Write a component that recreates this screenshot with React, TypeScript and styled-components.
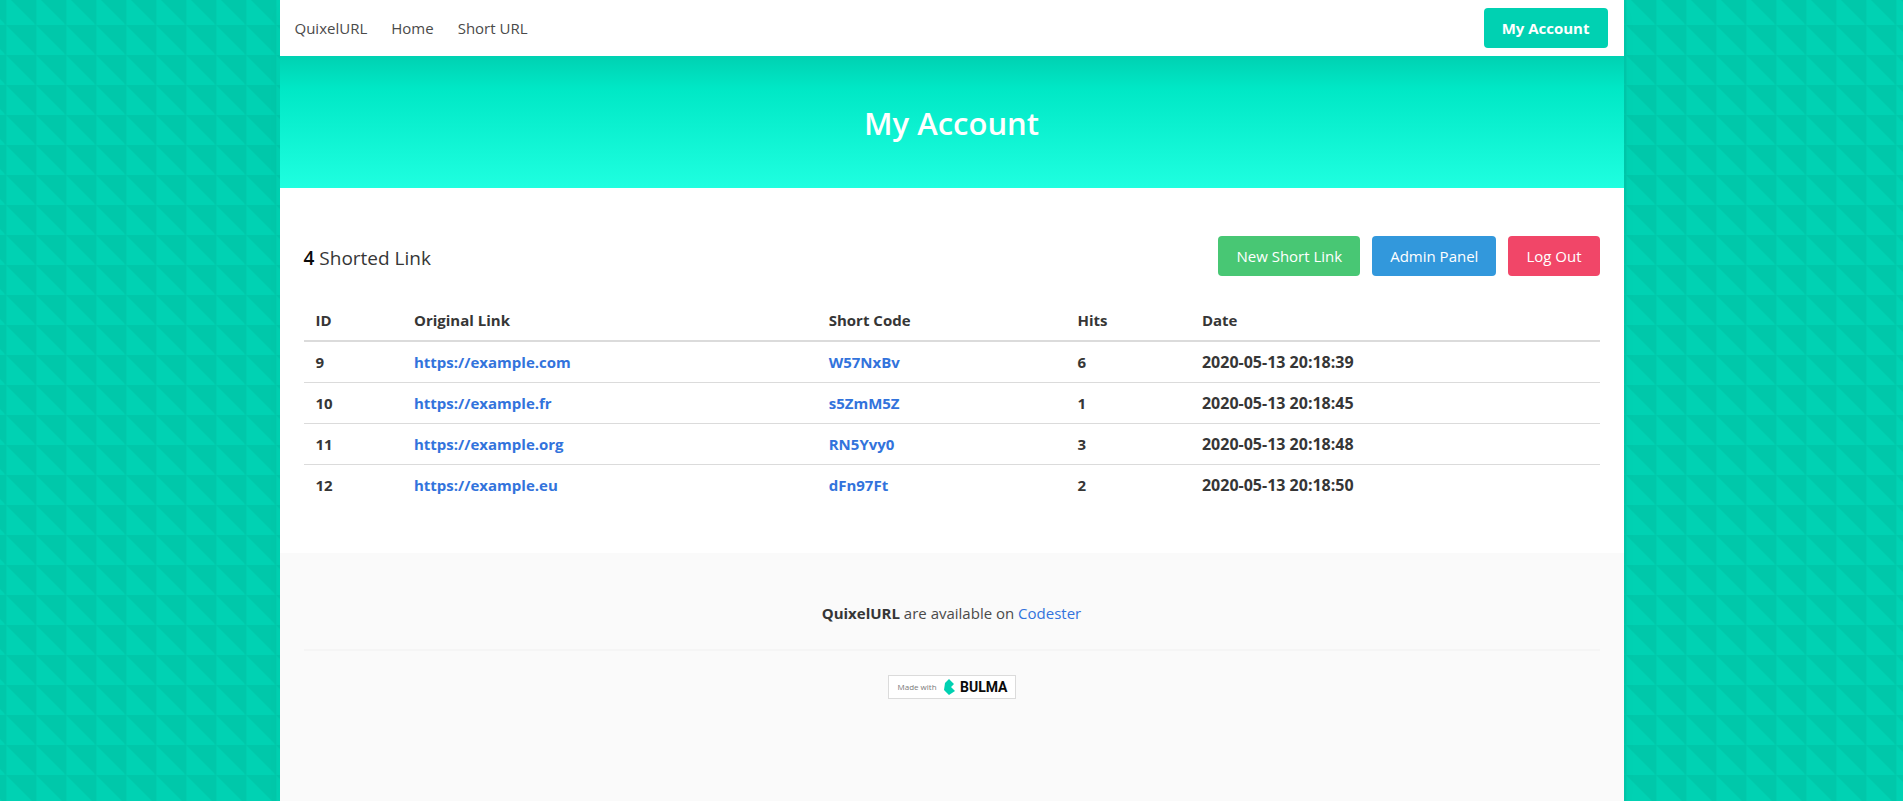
import React from 'react';
import styled, { createGlobalStyle } from 'styled-components';

const GlobalStyle = createGlobalStyle`
  *, *::before, *::after { box-sizing: border-box; }
  body {
    margin: 0;
    font-family: "Open Sans", "Noto Sans", sans-serif;
    font-size: 15px;
    line-height: 24px;
    color: #4a4a4a;
    background-color: #00d1b2;
    background-image:
      linear-gradient(90deg, rgba(0, 200, 170, 0.4) 3px, transparent 3px),
      linear-gradient(45deg, #00d2b3 49%, #00c8aa 51%);
    background-size: 30px 30px;
    background-position: 4px 25px, 6px 25px;
  }
`;

const Page = styled.div`
  display: flex;
  flex-direction: column;
  max-width: 1344px;
  min-height: 100vh;
  margin: 0 auto;
  background: #fff;
  box-shadow: 0 8px 16px -2px rgba(10, 10, 10, 0.04);
`;

const Navbar = styled.nav`
  display: flex;
  align-items: center;
  justify-content: space-between;
  min-height: 56px;
  padding: 8px 16px 8px 15px;
`;

const NavLinks = styled.div`
  display: flex;
  gap: 24px;
`;

const NavLink = styled.a`
  color: #4a4a4a;
  text-decoration: none;
`;

const tones = {
  primary: '#00d1b2',
  success: '#48c774',
  info: '#3298dc',
  danger: '#f14668',
};

const Button = styled.button<{ $tone: keyof typeof tones; $strong?: boolean }>`
  height: 40px;
  padding: 0 18px;
  border: 0;
  border-radius: 4px;
  background: ${({ $tone }) => tones[$tone]};
  color: #fff;
  font: inherit;
  font-weight: ${({ $strong }) => ($strong ? 700 : 400)};
  white-space: nowrap;
  cursor: pointer;
`;

const Hero = styled.header`
  padding: 48px 24px;
  background: linear-gradient(#00d1b2, #00e8c6 25%, #1fffe0);
  text-align: center;
`;

const Title = styled.h1`
  margin: 0;
  padding-top: 2px;
  color: #fff;
  font-size: 31px;
  font-weight: 600;
  line-height: 34px;
`;

const Section = styled.section`
  padding: 48px 24px;
`;

const Level = styled.div`
  display: flex;
  align-items: center;
  justify-content: space-between;
  margin-bottom: 24px;
`;

const Summary = styled.p`
  margin: 0;
  padding-top: 4px;
  color: #363636;
  font-size: 19px;
  font-weight: 400;

  strong {
    color: #0a0a0a;
    font-weight: 600;
  }
`;

const Actions = styled.div`
  display: flex;
  gap: 12px;
`;

const Table = styled.table`
  width: 100%;
  border-collapse: separate;
  border-spacing: 0;
  table-layout: fixed;
  color: #363636;
  text-align: left;

  th, td {
    padding: 8px 12px;
    border-bottom: 1px solid #dbdbdb;
    font-weight: 700;
  }
  thead th { border-bottom-width: 2px; }
  tbody tr:last-child td { border-bottom: 0; }
`;

const Column = styled.col<{ $share?: string }>`
  width: ${({ $share }) => $share ?? 'auto'};
`;

const DateCell = styled.td`
  font-size: 16px;
`;

const Link = styled.a`
  color: #3273dc;
  text-decoration: none;
`;

const Footer = styled.footer`
  flex: 1;
  padding: 48px 24px 96px;
  background: #fafafa;
  text-align: center;

  p { margin: 0; }
  strong { color: #363636; }
`;

const Divider = styled.hr`
  height: 2px;
  margin: 24px 0;
  border: 0;
  background: #f5f5f5;
`;

const Badge = styled.a`
  display: flex;
  align-items: center;
  justify-content: space-between;
  width: 128px;
  height: 24px;
  margin: 0 auto;
  padding: 0 7px 0 9px;
  border: 1px solid #dbdbdb;
  background: #fff;
  color: #7a7a7a;
  font-size: 8px;
  line-height: 22px;
  text-decoration: none;
  white-space: nowrap;
`;

const BadgeLogo = styled.span`
  display: flex;
  align-items: center;
  gap: 5px;
  color: #0a0a0a;
  font-family: Roboto, sans-serif;
  font-size: 14px;
  font-weight: 700;
`;

const links = [
  { id: 9, url: 'https://example.com', code: 'W57NxBv', hits: 6, date: '2020-05-13 20:18:39' },
  { id: 10, url: 'https://example.fr', code: 's5ZmM5Z', hits: 1, date: '2020-05-13 20:18:45' },
  { id: 11, url: 'https://example.org', code: 'RN5Yvy0', hits: 3, date: '2020-05-13 20:18:48' },
  { id: 12, url: 'https://example.eu', code: 'dFn97Ft', hits: 2, date: '2020-05-13 20:18:50' },
];

export default function App() {
  return (
    <>
      <GlobalStyle />
      <Page>
        <Navbar>
          <NavLinks>
            <NavLink href="#">QuixelURL</NavLink>
            <NavLink href="#">Home</NavLink>
            <NavLink href="#">Short URL</NavLink>
          </NavLinks>
          <Button $tone="primary" $strong>My Account</Button>
        </Navbar>
        <Hero>
          <Title>My Account</Title>
        </Hero>
        <Section>
          <Level>
            <Summary><strong>{links.length}</strong> Shorted Link</Summary>
            <Actions>
              <Button $tone="success">New Short Link</Button>
              <Button $tone="info">Admin Panel</Button>
              <Button $tone="danger">Log Out</Button>
            </Actions>
          </Level>
          <Table>
            <colgroup>
              <Column $share="7.6%" />
              <Column $share="32%" />
              <Column $share="19.2%" />
              <Column $share="9.6%" />
              <Column />
            </colgroup>
            <thead>
              <tr>
                <th scope="col">ID</th>
                <th scope="col">Original Link</th>
                <th scope="col">Short Code</th>
                <th scope="col">Hits</th>
                <th scope="col">Date</th>
              </tr>
            </thead>
            <tbody>
              {links.map((link) => (
                <tr key={link.id}>
                  <td>{link.id}</td>
                  <td><Link href={link.url}>{link.url}</Link></td>
                  <td><Link href={`#${link.code}`}>{link.code}</Link></td>
                  <td>{link.hits}</td>
                  <DateCell>{link.date}</DateCell>
                </tr>
              ))}
            </tbody>
          </Table>
        </Section>
        <Footer>
          <p><strong>QuixelURL</strong> are available on <Link href="#">Codester</Link></p>
          <Divider />
          <Badge href="#">
            Made with
            <BadgeLogo>
              <svg width="11" height="16" viewBox="0 0 110 160" aria-hidden="true">
                <path d="M0 110L10 40L50 0L100 50L70 80L110 120L50 160Z" fill="#00d1b2" />
              </svg>
              BULMA
            </BadgeLogo>
          </Badge>
        </Footer>
      </Page>
    </>
  );
}
